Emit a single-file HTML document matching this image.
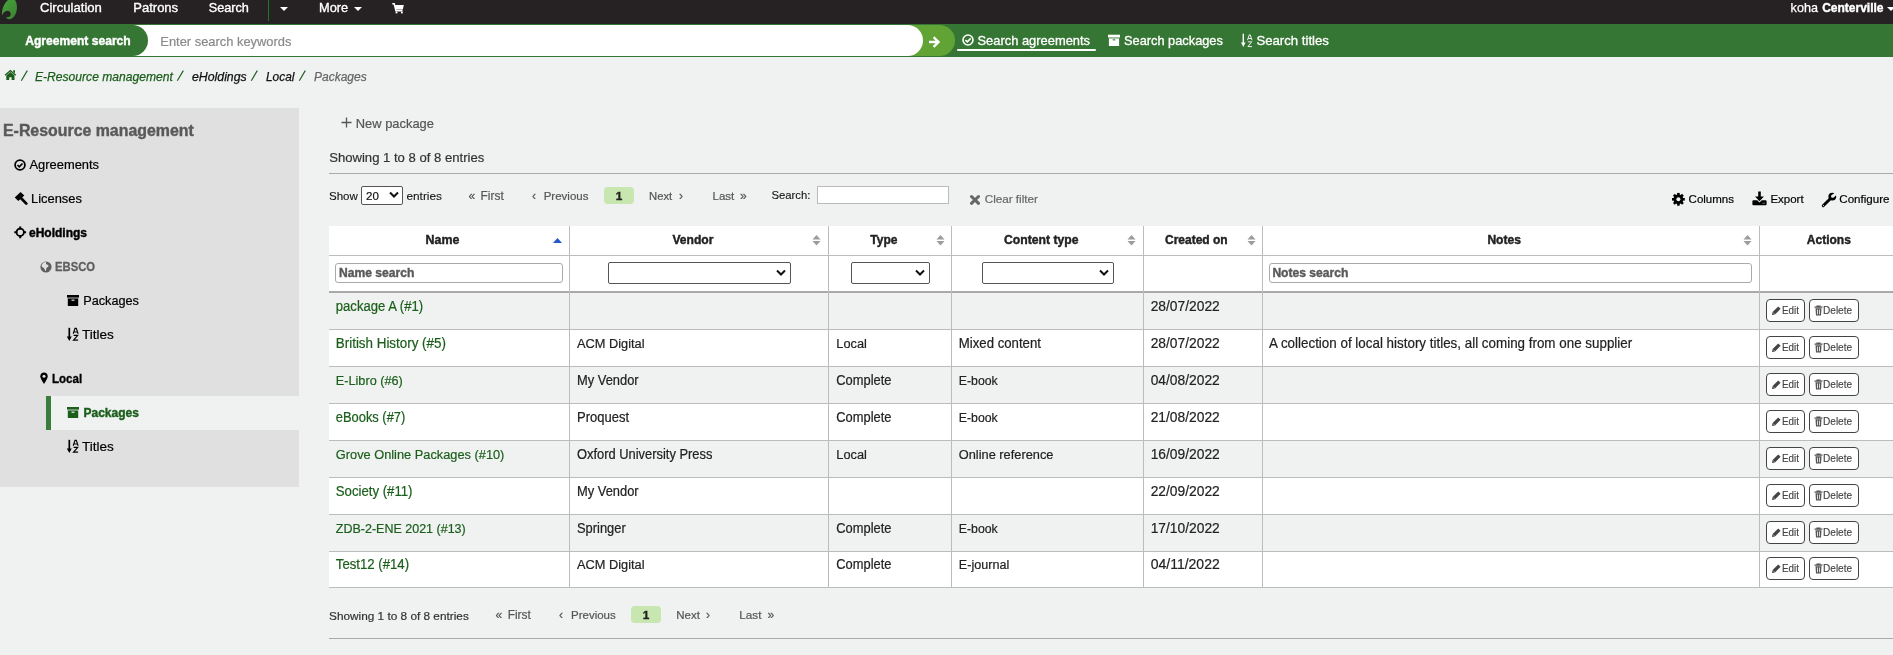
<!DOCTYPE html><html><head><meta charset="utf-8"><style>
html,body{margin:0;padding:0;}
body{width:1893px;height:655px;overflow:hidden;position:relative;will-change:transform;background:#F0F1F1;font-family:"Liberation Sans",sans-serif;}
.t{position:absolute;white-space:nowrap;line-height:1;}
.r{position:absolute;}
</style></head><body>
<div class="r" style="left:0px;top:0px;width:1893px;height:24px;background:#262122;"></div>
<svg class="r" style="left:0px;top:0px;" width="20" height="20" viewBox="0 0 20 20"><defs><linearGradient id="lg" x1="0" y1="0" x2="1" y2="1"><stop offset="0" stop-color="#48a03a"/><stop offset="1" stop-color="#3a8431"/></linearGradient></defs><path d="M8 0 H15 C17.5 3.5 17.6 10 15.6 14 C14 17.5 11.5 19.5 9 19.2 C7.5 19 6.3 18 5.9 17.2 C8.5 17.6 10.9 16.3 10.8 14 C10.7 11.6 8.5 10.6 6.5 10.9 C4.5 11.2 3 12.8 2 15.4 C1.5 10 3.5 4 8 0 Z" fill="url(#lg)"/></svg>
<div class="t" style="left:40.0px;top:1px;font-size:13.1px;color:#fff;font-weight:normal;font-style:normal;-webkit-text-stroke:0.35px #fff;">Circulation</div>
<div class="t" style="left:133.3px;top:1px;font-size:13.0px;color:#fff;font-weight:normal;font-style:normal;-webkit-text-stroke:0.35px #fff;">Patrons</div>
<div class="t" style="left:208.7px;top:2px;font-size:12.7px;color:#fff;font-weight:normal;font-style:normal;-webkit-text-stroke:0.35px #fff;">Search</div>
<div class="t" style="left:319.0px;top:2px;font-size:12.8px;color:#fff;font-weight:normal;font-style:normal;-webkit-text-stroke:0.35px #fff;">More</div>
<div class="r" style="left:268px;top:0px;width:1px;height:21px;background:#1f7a1f;"></div>
<svg class="r" style="left:279px;top:5px;" width="10" height="8" viewBox="0 0 10 8"><path d="M1 2 L9 2 L5 6 Z" fill="#fff"/></svg>
<svg class="r" style="left:353px;top:5px;" width="10" height="8" viewBox="0 0 10 8"><path d="M1 2 L9 2 L5 6 Z" fill="#fff"/></svg>
<svg class="r" style="left:392px;top:3px;" width="12" height="11" viewBox="0 0 12 11"><path d="M0.3 0.8 H2.2 L4 7.6 H10.5" fill="none" stroke="#fff" stroke-width="1.6"/><path d="M3 2 H11.8 L10.8 6.6 H4.2 Z" fill="#fff"/><rect x="3.6" y="8.6" width="1.8" height="1.8" fill="#fff"/><rect x="9" y="8.6" width="1.8" height="1.8" fill="#fff"/></svg>
<div class="t" style="left:1790.6px;top:2px;font-size:12.6px;color:#fff;font-weight:normal;font-style:normal;-webkit-text-stroke:0.25px #fff;">koha</div>
<div class="t" style="left:1822.2px;top:2px;font-size:12.0px;color:#fff;font-weight:bold;font-style:normal;-webkit-text-stroke:0.4px #fff;">Centerville</div>
<svg class="r" style="left:1886px;top:5px;" width="8" height="8" viewBox="0 0 8 8"><path d="M1 2 L9 2 L5 6 Z" fill="#fff"/></svg>
<div class="r" style="left:0px;top:24px;width:1893px;height:33px;background:#367634;"></div>
<div class="r" style="left:880px;top:25px;width:75px;height:31px;background:#61a334;border-radius:0 16px 16px 0;"></div>
<div class="r" style="left:100px;top:25px;width:823px;height:31px;background:#fff;border-radius:0 16px 16px 0;"></div>
<div class="r" style="left:0px;top:25px;width:148px;height:31px;background:#367634;border-radius:0 16px 16px 0;"></div>
<div class="t" style="left:25.2px;top:35px;font-size:12.1px;color:#fff;font-weight:bold;font-style:normal;-webkit-text-stroke:0.4px #fff;">Agreement search</div>
<div class="t" style="left:160.3px;top:36px;font-size:12.9px;color:#8a8a8a;font-weight:normal;font-style:normal;-webkit-text-stroke:0.2px #8a8a8a;">Enter search keywords</div>
<svg class="r" style="left:929px;top:36px;" width="12" height="12" viewBox="0 0 12 12"><path d="M1 6 H9 M5.5 2 L9.5 6 L5.5 10" fill="none" stroke="#fff" stroke-width="2.4" stroke-linecap="square"/></svg>
<svg class="r" style="left:962px;top:34px;" width="12" height="12" viewBox="0 0 12 12"><circle cx="6" cy="6" r="5" fill="none" stroke="#fff" stroke-width="1.6"/><path d="M3.4 6 L5.3 7.9 L8.7 4.4" fill="none" stroke="#fff" stroke-width="1.6"/></svg>
<div class="t" style="left:977.5px;top:35px;font-size:12.9px;color:#fff;font-weight:normal;font-style:normal;-webkit-text-stroke:0.3px #fff;">Search agreements</div>
<div class="r" style="left:957px;top:49px;width:139px;height:2px;background:#fff;border-radius:1px;"></div>
<svg class="r" style="left:1108px;top:34px;" width="12" height="13" viewBox="0 0 12 13"><rect x="0" y="0.7" width="12" height="2.8" fill="#fff"/><path d="M0.9 4.4 H11.1 V12 H0.9 Z" fill="#fff"/><rect x="4.7" y="5.3" width="2.6" height="1.1" fill="#367634"/></svg>
<div class="t" style="left:1124.0px;top:35px;font-size:12.8px;color:#fff;font-weight:normal;font-style:normal;-webkit-text-stroke:0.3px #fff;">Search packages</div>
<svg class="r" style="left:1240px;top:33px;" width="14" height="15" viewBox="0 0 14 15"><path d="M3.3 0.8 V10" stroke="#fff" stroke-width="1.4"/><path d="M1 9.6 H5.6 L3.3 13.9 Z" fill="#fff"/><path d="M7.5 7.2 L9.3 1.8 H10.2 L12 7.2 M8.3 5.5 H11.2" fill="none" stroke="#fff" stroke-width="0.9"/><path d="M7.9 8.8 H11.7 L7.9 13.6 H12" fill="none" stroke="#fff" stroke-width="0.9"/></svg>
<div class="t" style="left:1256.4px;top:34px;font-size:13.2px;color:#fff;font-weight:normal;font-style:normal;-webkit-text-stroke:0.3px #fff;">Search titles</div>
<svg class="r" style="left:4px;top:69px;" width="14" height="12" viewBox="0 0 14 12"><path d="M6.4 0.8 L0.6 5.8 L1.5 6.8 L6.4 2.6 L11.3 6.8 L12.2 5.8 Z" fill="#1b5e1b"/><path d="M9.2 1.3 H11 V4.3 L9.2 2.8 Z" fill="#1b5e1b"/><path d="M2.3 6.5 L6.4 3 L10.5 6.5 V11 H7.6 V8.3 H5.2 V11 H2.3 Z" fill="#1b5e1b"/></svg>
<svg class="r" style="left:20px;top:69px;" width="9" height="13" viewBox="0 0 9 13"><path d="M1.3 11.8 L7.3 1.6" stroke="#1a5e1a" stroke-width="1.15"/></svg>
<div class="t" style="left:35.0px;top:71px;font-size:12.1px;color:#1a5e1a;font-weight:normal;font-style:italic;-webkit-text-stroke:0.25px #1a5e1a;">E-Resource management</div>
<svg class="r" style="left:176px;top:69px;" width="9" height="13" viewBox="0 0 9 13"><path d="M1.3 11.8 L7.3 1.6" stroke="#1a5e1a" stroke-width="1.15"/></svg>
<div class="t" style="left:192.0px;top:71px;font-size:12.3px;color:#111;font-weight:normal;font-style:italic;-webkit-text-stroke:0.25px #111;">eHoldings</div>
<svg class="r" style="left:250px;top:69px;" width="9" height="13" viewBox="0 0 9 13"><path d="M1.3 11.8 L7.3 1.6" stroke="#1a5e1a" stroke-width="1.15"/></svg>
<div class="t" style="left:266.0px;top:72px;font-size:11.9px;color:#111;font-weight:normal;font-style:italic;-webkit-text-stroke:0.25px #111;">Local</div>
<svg class="r" style="left:298px;top:69px;" width="9" height="13" viewBox="0 0 9 13"><path d="M1.3 11.8 L7.3 1.6" stroke="#1a5e1a" stroke-width="1.15"/></svg>
<div class="t" style="left:314.0px;top:71px;font-size:12.0px;color:#666;font-weight:normal;font-style:italic;-webkit-text-stroke:0.25px #666;">Packages</div>
<div class="r" style="left:0px;top:108px;width:299px;height:379px;background:#e0e0e0;"></div>
<div class="t" style="left:3.0px;top:123px;font-size:15.9px;color:#595959;font-weight:bold;font-style:normal;-webkit-text-stroke:0.4px #595959;">E-Resource management</div>
<svg class="r" style="left:14px;top:159px;" width="12" height="12" viewBox="0 0 12 12"><circle cx="6" cy="6" r="4.9" fill="none" stroke="#000" stroke-width="1.8"/><path d="M3.5 6 L5.3 7.8 L8.5 4.5" fill="none" stroke="#000" stroke-width="1.7"/></svg>
<div class="t" style="left:29.5px;top:159px;font-size:12.9px;color:#000;font-weight:normal;font-style:normal;-webkit-text-stroke:0.2px #000;">Agreements</div>
<svg class="r" style="left:14px;top:191px;" width="14" height="15" viewBox="0 0 14 15"><path d="M0.7 6.4 L6.6 1.1 L10.3 4.6 L4.4 9.9 Z" fill="#000"/><path d="M7.4 7.5 L12.3 12.6" stroke="#000" stroke-width="2.7" stroke-linecap="round"/></svg>
<div class="t" style="left:31.0px;top:193px;font-size:12.9px;color:#000;font-weight:normal;font-style:normal;-webkit-text-stroke:0.2px #000;">Licenses</div>
<svg class="r" style="left:14px;top:226px;" width="13" height="13" viewBox="0 0 13 13"><circle cx="6.2" cy="6.3" r="3.7" fill="none" stroke="#000" stroke-width="1.8"/><path d="M6.2 0.4 V3.4 M6.2 9.2 V12.2 M0.3 6.3 H3.3 M9.1 6.3 H12.1" stroke="#000" stroke-width="2"/></svg>
<div class="t" style="left:29.0px;top:227px;font-size:12.0px;color:#000;font-weight:bold;font-style:normal;-webkit-text-stroke:0.4px #000;">eHoldings</div>
<svg class="r" style="left:40px;top:261px;" width="12" height="12" viewBox="0 0 12 12"><circle cx="6" cy="6" r="5.6" fill="#5e5e5e"/><path d="M2.2 3 C3 1.6 4.6 0.8 6 0.9 C6.4 1.8 5.6 2.4 6.2 3.2 C7 4 8.4 3.2 8.6 4.6 C8.7 5.8 7.2 6.2 6.4 7.2 C5.8 8 6.6 9.4 5.6 10 C4.6 9.6 4.8 8 4 7.2 C3.2 6.4 1.8 6.2 1.6 5 C1.5 4.2 1.8 3.6 2.2 3 Z" fill="#e0e0e0"/><path d="M8.6 10 C9.4 9.4 10.2 8.8 10.6 8.2 C10.2 9.2 9.6 9.8 8.6 10 Z" fill="#e0e0e0"/></svg>
<div class="t" style="left:55.4px;top:261px;font-size:12.8px;color:#5e5e5e;font-weight:bold;font-style:normal;-webkit-text-stroke:0.3px #5e5e5e;transform:scaleX(0.881);transform-origin:0 0;">EBSCO</div>
<svg class="r" style="left:67px;top:295px;" width="12" height="11" viewBox="0 0 12 11"><rect x="0" y="0" width="12" height="2.6" fill="#000"/><path d="M0.8 3.4 H11.2 V11 H0.8 Z" fill="#000"/><rect x="4.5" y="4.6" width="3" height="1.2" fill="#e0e0e0"/></svg>
<div class="t" style="left:83.2px;top:295px;font-size:12.7px;color:#000;font-weight:normal;font-style:normal;-webkit-text-stroke:0.2px #000;">Packages</div>
<svg class="r" style="left:66px;top:327px;" width="13" height="15" viewBox="0 0 13 15"><path d="M3.3 0.8 V10" stroke="#000" stroke-width="1.7"/><path d="M0.8 9.4 H5.8 L3.3 13.9 Z" fill="#000"/><path d="M7.2 6.7 L9 1.3 H10.3 L12.1 6.7 M8.1 5 H11.2" fill="none" stroke="#000" stroke-width="1.15"/><path d="M7.6 8.3 H11.8 L7.6 13.2 H12.1" fill="none" stroke="#000" stroke-width="1.25"/></svg>
<div class="t" style="left:82.0px;top:328px;font-size:13.5px;color:#000;font-weight:normal;font-style:normal;-webkit-text-stroke:0.2px #000;">Titles</div>
<svg class="r" style="left:40px;top:372px;" width="9" height="13" viewBox="0 0 9 13"><path d="M4 0.6 C1.8 0.6 0.3 2.3 0.3 4.3 C0.3 6.8 4 12 4 12 C4 12 7.7 6.8 7.7 4.3 C7.7 2.3 6.2 0.6 4 0.6 Z" fill="#000"/><circle cx="4" cy="4.2" r="1.5" fill="#e0e0e0"/></svg>
<div class="t" style="left:51.5px;top:372px;font-size:13.2px;color:#000;font-weight:bold;font-style:normal;-webkit-text-stroke:0.35px #000;transform:scaleX(0.874);transform-origin:0 0;">Local</div>
<div class="r" style="left:46px;top:396px;width:253px;height:34px;background:#f0f1f1;"></div>
<div class="r" style="left:46px;top:396px;width:5px;height:34px;background:#3a7d3a;"></div>
<svg class="r" style="left:67px;top:407px;" width="12" height="11" viewBox="0 0 12 11"><rect x="0" y="0" width="12" height="2.6" fill="#1b5e1b"/><path d="M0.8 3.4 H11.2 V11 H0.8 Z" fill="#1b5e1b"/><rect x="4.5" y="4.6" width="3" height="1.2" fill="#f0f1f1"/></svg>
<div class="t" style="left:83.5px;top:407px;font-size:12.0px;color:#1b5e1b;font-weight:bold;font-style:normal;-webkit-text-stroke:0.4px #1b5e1b;">Packages</div>
<svg class="r" style="left:66px;top:439px;" width="13" height="15" viewBox="0 0 13 15"><path d="M3.3 0.8 V10" stroke="#000" stroke-width="1.7"/><path d="M0.8 9.4 H5.8 L3.3 13.9 Z" fill="#000"/><path d="M7.2 6.7 L9 1.3 H10.3 L12.1 6.7 M8.1 5 H11.2" fill="none" stroke="#000" stroke-width="1.15"/><path d="M7.6 8.3 H11.8 L7.6 13.2 H12.1" fill="none" stroke="#000" stroke-width="1.25"/></svg>
<div class="t" style="left:82.0px;top:440px;font-size:13.5px;color:#000;font-weight:normal;font-style:normal;-webkit-text-stroke:0.2px #000;">Titles</div>
<svg class="r" style="left:341px;top:117px;" width="11" height="11" viewBox="0 0 11 11"><path d="M5.5 0.5 V10.5 M0.5 5.5 H10.5" stroke="#555" stroke-width="1.3"/></svg>
<div class="t" style="left:355.8px;top:118px;font-size:12.9px;color:#555;font-weight:normal;font-style:normal;-webkit-text-stroke:0.2px #555;">New package</div>
<div class="t" style="left:329.2px;top:151px;font-size:13.1px;color:#333;font-weight:normal;font-style:normal;-webkit-text-stroke:0.2px #333;">Showing 1 to 8 of 8 entries</div>
<div class="r" style="left:329px;top:173px;width:1564px;height:1px;background:#aaa;"></div>
<div class="t" style="left:329.0px;top:191px;font-size:11.5px;color:#111;font-weight:normal;font-style:normal;-webkit-text-stroke:0.1px #111;">Show</div>
<div class="r" style="left:361px;top:186px;width:42px;height:19px;background:#fff;box-sizing:border-box;border:1px solid #555;border-radius:2px;"></div>
<div class="t" style="left:366px;top:191px;font-size:11.5px;color:#111;font-weight:normal;font-style:normal;-webkit-text-stroke:0.2px #111;">20</div>
<svg class="r" style="left:389px;top:191px;" width="10" height="8" viewBox="0 0 10 8"><path d="M1 1.5 L5 5.5 L9 1.5" fill="none" stroke="#111" stroke-width="2"/></svg>
<div class="t" style="left:406.5px;top:191px;font-size:11.8px;color:#111;font-weight:normal;font-style:normal;-webkit-text-stroke:0.1px #111;">entries</div>
<div class="t" style="left:468.5px;top:190px;font-size:12px;color:#555;font-weight:normal;font-style:normal;-webkit-text-stroke:0.2px #555;">&laquo;</div>
<div class="t" style="left:480.6px;top:191px;font-size:11.9px;color:#555;font-weight:normal;font-style:normal;-webkit-text-stroke:0.2px #555;">First</div>
<div class="t" style="left:532px;top:190px;font-size:12px;color:#555;font-weight:normal;font-style:normal;-webkit-text-stroke:0.2px #555;">&lsaquo;</div>
<div class="t" style="left:543.7px;top:191px;font-size:11.5px;color:#555;font-weight:normal;font-style:normal;-webkit-text-stroke:0.2px #555;">Previous</div>
<div class="r" style="left:604px;top:187px;width:30px;height:17px;background:#c8e6b0;border-radius:4px;"></div>
<div class="t" style="left:615.7px;top:191px;font-size:11.8px;color:#222;font-weight:bold;font-style:normal;-webkit-text-stroke:0.4px #222;">1</div>
<div class="t" style="left:649.0px;top:191px;font-size:11.3px;color:#555;font-weight:normal;font-style:normal;-webkit-text-stroke:0.2px #555;">Next</div>
<div class="t" style="left:679px;top:190px;font-size:12px;color:#555;font-weight:normal;font-style:normal;-webkit-text-stroke:0.2px #555;">&rsaquo;</div>
<div class="t" style="left:712.5px;top:191px;font-size:11.5px;color:#555;font-weight:normal;font-style:normal;-webkit-text-stroke:0.2px #555;">Last</div>
<div class="t" style="left:740px;top:190px;font-size:12px;color:#555;font-weight:normal;font-style:normal;-webkit-text-stroke:0.2px #555;">&raquo;</div>
<div class="t" style="left:771.4px;top:190px;font-size:11.3px;color:#111;font-weight:normal;font-style:normal;-webkit-text-stroke:0.1px #111;">Search:</div>
<div class="r" style="left:817px;top:186px;width:132px;height:18px;background:#fff;box-sizing:border-box;border:1px solid #bbb;"></div>
<svg class="r" style="left:969px;top:194px;" width="12" height="12" viewBox="0 0 12 12"><path d="M2.5 2.5 L9.5 9.3 M9.5 2.5 L2.5 9.3" stroke="#666" stroke-width="3" stroke-linecap="round"/></svg>
<div class="t" style="left:984.7px;top:193px;font-size:11.7px;color:#666;font-weight:normal;font-style:normal;-webkit-text-stroke:0.2px #666;">Clear filter</div>
<svg class="r" style="left:1671px;top:192px;" width="15" height="15" viewBox="0 0 15 15"><circle cx="7.4" cy="7.3" r="4.9" fill="#000"/><rect x="6.1" y="0.9" width="2.6" height="3" transform="rotate(0 7.4 7.3)" fill="#000"/><rect x="6.1" y="0.9" width="2.6" height="3" transform="rotate(45 7.4 7.3)" fill="#000"/><rect x="6.1" y="0.9" width="2.6" height="3" transform="rotate(90 7.4 7.3)" fill="#000"/><rect x="6.1" y="0.9" width="2.6" height="3" transform="rotate(135 7.4 7.3)" fill="#000"/><rect x="6.1" y="0.9" width="2.6" height="3" transform="rotate(180 7.4 7.3)" fill="#000"/><rect x="6.1" y="0.9" width="2.6" height="3" transform="rotate(225 7.4 7.3)" fill="#000"/><rect x="6.1" y="0.9" width="2.6" height="3" transform="rotate(270 7.4 7.3)" fill="#000"/><rect x="6.1" y="0.9" width="2.6" height="3" transform="rotate(315 7.4 7.3)" fill="#000"/><circle cx="7.4" cy="7.3" r="2" fill="#f0f1f1"/></svg>
<div class="t" style="left:1688.6px;top:194px;font-size:11.5px;color:#000;font-weight:normal;font-style:normal;-webkit-text-stroke:0.2px #000;">Columns</div>
<svg class="r" style="left:1752px;top:191px;" width="16" height="15" viewBox="0 0 16 15"><path d="M6.2 0.5 H8.8 V5.6 H11.9 L7.5 10.3 L3.1 5.6 H6.2 Z" fill="#000"/><path d="M1.4 9.2 H5.2 L7.5 11.6 L9.8 9.2 H13.6 Q14.6 9.2 14.6 10.2 V13.2 Q14.6 14.2 13.6 14.2 H1.4 Q0.4 14.2 0.4 13.2 V10.2 Q0.4 9.2 1.4 9.2 Z" fill="#000"/><rect x="10.5" y="11.8" width="2.5" height="0.8" fill="#888"/></svg>
<div class="t" style="left:1770.4px;top:194px;font-size:11.5px;color:#000;font-weight:normal;font-style:normal;-webkit-text-stroke:0.2px #000;">Export</div>
<svg class="r" style="left:1821px;top:192px;" width="16" height="16" viewBox="0 0 16 16"><path d="M9.3 6.7 L2.2 13.8" stroke="#000" stroke-width="2.9" stroke-linecap="round"/><circle cx="11.3" cy="4.6" r="3.9" fill="#000"/><circle cx="11.7" cy="4.2" r="1.6" fill="#f0f1f1"/><path d="M11.3 3.0 L13.6 0.7 L15.6 2.7 L13.3 5.0 Z" fill="#f0f1f1"/><circle cx="2.4" cy="13.6" r="0.6" fill="#f0f1f1"/></svg>
<div class="t" style="left:1839.3px;top:193px;font-size:11.6px;color:#000;font-weight:normal;font-style:normal;-webkit-text-stroke:0.2px #000;">Configure</div>
<div class="r" style="left:329px;top:226px;width:1564px;height:65px;background:#fff;"></div>
<div class="r" style="left:329px;top:255px;width:1564px;height:1px;background:#bcbcbc;"></div>
<div class="r" style="left:329px;top:291px;width:1564px;height:2px;background:#a9a9a9;"></div>
<div class="r" style="left:329px;top:329px;width:1564px;height:1px;background:#bcbcbc;"></div>
<div class="r" style="left:329px;top:330px;width:1564px;height:36px;background:#fff;"></div>
<div class="r" style="left:329px;top:366px;width:1564px;height:1px;background:#bcbcbc;"></div>
<div class="r" style="left:329px;top:403px;width:1564px;height:1px;background:#bcbcbc;"></div>
<div class="r" style="left:329px;top:404px;width:1564px;height:36px;background:#fff;"></div>
<div class="r" style="left:329px;top:440px;width:1564px;height:1px;background:#bcbcbc;"></div>
<div class="r" style="left:329px;top:477px;width:1564px;height:1px;background:#bcbcbc;"></div>
<div class="r" style="left:329px;top:478px;width:1564px;height:36px;background:#fff;"></div>
<div class="r" style="left:329px;top:514px;width:1564px;height:1px;background:#bcbcbc;"></div>
<div class="r" style="left:329px;top:551px;width:1564px;height:1px;background:#bcbcbc;"></div>
<div class="r" style="left:329px;top:552px;width:1564px;height:35px;background:#fff;"></div>
<div class="r" style="left:329px;top:587px;width:1564px;height:1px;background:#bcbcbc;"></div>
<div class="r" style="left:569px;top:226px;width:1px;height:362px;background:#bcbcbc;"></div>
<div class="r" style="left:828px;top:226px;width:1px;height:362px;background:#bcbcbc;"></div>
<div class="r" style="left:951px;top:226px;width:1px;height:362px;background:#bcbcbc;"></div>
<div class="r" style="left:1143px;top:226px;width:1px;height:362px;background:#bcbcbc;"></div>
<div class="r" style="left:1262px;top:226px;width:1px;height:362px;background:#bcbcbc;"></div>
<div class="r" style="left:1759px;top:226px;width:1px;height:362px;background:#bcbcbc;"></div>
<div class="t" style="left:425.6px;top:234px;font-size:12.4px;color:#222;font-weight:bold;font-style:normal;-webkit-text-stroke:0.4px #222;">Name</div>
<svg class="r" style="left:552px;top:237px;" width="11" height="7" viewBox="0 0 11 7"><path d="M5.5 1 L10 6 H1 Z" fill="#2456cc"/></svg>
<div class="t" style="left:672.4px;top:234px;font-size:12.1px;color:#222;font-weight:bold;font-style:normal;-webkit-text-stroke:0.4px #222;">Vendor</div>
<svg class="r" style="left:812px;top:235px;" width="9" height="11" viewBox="0 0 9 11"><path d="M4.5 0 L8.5 4.6 H0.5 Z M4.5 10.5 L8.5 5.9 H0.5 Z" fill="#9c9c9c"/></svg>
<div class="t" style="left:870.3px;top:234px;font-size:12.0px;color:#222;font-weight:bold;font-style:normal;-webkit-text-stroke:0.4px #222;">Type</div>
<svg class="r" style="left:936px;top:235px;" width="9" height="11" viewBox="0 0 9 11"><path d="M4.5 0 L8.5 4.6 H0.5 Z M4.5 10.5 L8.5 5.9 H0.5 Z" fill="#9c9c9c"/></svg>
<div class="t" style="left:1004.0px;top:234px;font-size:12.2px;color:#222;font-weight:bold;font-style:normal;-webkit-text-stroke:0.4px #222;">Content type</div>
<svg class="r" style="left:1127px;top:235px;" width="9" height="11" viewBox="0 0 9 11"><path d="M4.5 0 L8.5 4.6 H0.5 Z M4.5 10.5 L8.5 5.9 H0.5 Z" fill="#9c9c9c"/></svg>
<div class="t" style="left:1165.0px;top:234px;font-size:12.0px;color:#222;font-weight:bold;font-style:normal;-webkit-text-stroke:0.4px #222;">Created on</div>
<svg class="r" style="left:1247px;top:235px;" width="9" height="11" viewBox="0 0 9 11"><path d="M4.5 0 L8.5 4.6 H0.5 Z M4.5 10.5 L8.5 5.9 H0.5 Z" fill="#9c9c9c"/></svg>
<div class="t" style="left:1487.4px;top:234px;font-size:12.1px;color:#222;font-weight:bold;font-style:normal;-webkit-text-stroke:0.4px #222;">Notes</div>
<svg class="r" style="left:1743px;top:235px;" width="9" height="11" viewBox="0 0 9 11"><path d="M4.5 0 L8.5 4.6 H0.5 Z M4.5 10.5 L8.5 5.9 H0.5 Z" fill="#9c9c9c"/></svg>
<div class="t" style="left:1806.8px;top:234px;font-size:12.0px;color:#222;font-weight:bold;font-style:normal;-webkit-text-stroke:0.4px #222;">Actions</div>
<div class="r" style="left:335px;top:263px;width:228px;height:20px;background:#fff;box-sizing:border-box;border:1px solid #aaa;border-radius:3px;"></div>
<div class="t" style="left:339.0px;top:267px;font-size:12.1px;color:#595959;font-weight:bold;font-style:normal;-webkit-text-stroke:0.4px #595959;">Name search</div>
<div class="r" style="left:608px;top:262px;width:183px;height:22px;background:#fff;box-sizing:border-box;border:1px solid #555;border-radius:2px;"></div>
<svg class="r" style="left:776px;top:269px;" width="10" height="8" viewBox="0 0 10 8"><path d="M1 1.5 L5 5.5 L9 1.5" fill="none" stroke="#111" stroke-width="2"/></svg>
<div class="r" style="left:851px;top:262px;width:79px;height:22px;background:#fff;box-sizing:border-box;border:1px solid #555;border-radius:2px;"></div>
<svg class="r" style="left:915px;top:269px;" width="10" height="8" viewBox="0 0 10 8"><path d="M1 1.5 L5 5.5 L9 1.5" fill="none" stroke="#111" stroke-width="2"/></svg>
<div class="r" style="left:982px;top:262px;width:132px;height:22px;background:#fff;box-sizing:border-box;border:1px solid #555;border-radius:2px;"></div>
<svg class="r" style="left:1099px;top:269px;" width="10" height="8" viewBox="0 0 10 8"><path d="M1 1.5 L5 5.5 L9 1.5" fill="none" stroke="#111" stroke-width="2"/></svg>
<div class="r" style="left:1269px;top:263px;width:483px;height:20px;background:#fff;box-sizing:border-box;border:1px solid #aaa;border-radius:3px;"></div>
<div class="t" style="left:1272.4px;top:267px;font-size:12.1px;color:#595959;font-weight:bold;font-style:normal;-webkit-text-stroke:0.4px #595959;">Notes search</div>
<div class="t" style="left:335.8px;top:300px;font-size:13.1px;color:#1a5e1a;font-weight:normal;font-style:normal;-webkit-text-stroke:0.2px #1a5e1a;transform:scaleY(1.07);transform-origin:0 11px;">package A (#1)</div>
<div class="t" style="left:1150.7px;top:300px;font-size:13.8px;color:#222;font-weight:normal;font-style:normal;-webkit-text-stroke:0.2px #222;transform:scaleY(1.07);transform-origin:0 11px;">28/07/2022</div>
<div class="r" style="left:1766px;top:299px;width:39px;height:23px;background:#fff;box-sizing:border-box;border:1px solid #444;border-radius:4px;"></div>
<svg class="r" style="left:1771px;top:305px;" width="10" height="11" viewBox="0 0 10 11"><path d="M1 10 L1.6 7 L7.2 1.4 L9.6 3.8 L4 9.4 Z" fill="#444"/><path d="M2.2 7.6 L4.4 9.8" stroke="#fff" stroke-width="0.5"/></svg>
<div class="t" style="left:1781.6px;top:305px;font-size:10.6px;color:#444;font-weight:normal;font-style:normal;-webkit-text-stroke:0.15px #444;transform:scaleX(0.928);transform-origin:0 0;">Edit</div>
<div class="r" style="left:1809px;top:299px;width:50px;height:23px;background:#fff;box-sizing:border-box;border:1px solid #444;border-radius:4px;"></div>
<svg class="r" style="left:1814px;top:305px;" width="9" height="11" viewBox="0 0 9 11"><path d="M0.5 2.2 H8.5 M3 2 V1 H6 V2" fill="none" stroke="#555" stroke-width="1.2"/><path d="M1.5 3.3 H7.5 L7 10.5 H2 Z" fill="#555"/><path d="M3.5 4.5 V9.3 M5.5 4.5 V9.3" stroke="#fff" stroke-width="0.8"/></svg>
<div class="t" style="left:1823.4px;top:305px;font-size:10.6px;color:#444;font-weight:normal;font-style:normal;-webkit-text-stroke:0.15px #444;transform:scaleX(0.951);transform-origin:0 0;">Delete</div>
<div class="t" style="left:335.8px;top:337px;font-size:13.4px;color:#1a5e1a;font-weight:normal;font-style:normal;-webkit-text-stroke:0.2px #1a5e1a;transform:scaleY(1.07);transform-origin:0 11px;">British History (#5)</div>
<div class="t" style="left:577.0px;top:338px;font-size:12.8px;color:#222;font-weight:normal;font-style:normal;-webkit-text-stroke:0.2px #222;transform:scaleY(1.07);transform-origin:0 10px;">ACM Digital</div>
<div class="t" style="left:836.3px;top:338px;font-size:12.8px;color:#222;font-weight:normal;font-style:normal;-webkit-text-stroke:0.2px #222;transform:scaleY(1.07);transform-origin:0 10px;">Local</div>
<div class="t" style="left:958.8px;top:337px;font-size:13.2px;color:#222;font-weight:normal;font-style:normal;-webkit-text-stroke:0.2px #222;transform:scaleY(1.07);transform-origin:0 11px;">Mixed content</div>
<div class="t" style="left:1269.0px;top:337px;font-size:13.4px;color:#222;font-weight:normal;font-style:normal;-webkit-text-stroke:0.2px #222;transform:scaleY(1.07);transform-origin:0 11px;">A collection of local history titles, all coming from one supplier</div>
<div class="t" style="left:1150.7px;top:337px;font-size:13.8px;color:#222;font-weight:normal;font-style:normal;-webkit-text-stroke:0.2px #222;transform:scaleY(1.07);transform-origin:0 11px;">28/07/2022</div>
<div class="r" style="left:1766px;top:336px;width:39px;height:23px;background:#fff;box-sizing:border-box;border:1px solid #444;border-radius:4px;"></div>
<svg class="r" style="left:1771px;top:342px;" width="10" height="11" viewBox="0 0 10 11"><path d="M1 10 L1.6 7 L7.2 1.4 L9.6 3.8 L4 9.4 Z" fill="#444"/><path d="M2.2 7.6 L4.4 9.8" stroke="#fff" stroke-width="0.5"/></svg>
<div class="t" style="left:1781.6px;top:342px;font-size:10.6px;color:#444;font-weight:normal;font-style:normal;-webkit-text-stroke:0.15px #444;transform:scaleX(0.928);transform-origin:0 0;">Edit</div>
<div class="r" style="left:1809px;top:336px;width:50px;height:23px;background:#fff;box-sizing:border-box;border:1px solid #444;border-radius:4px;"></div>
<svg class="r" style="left:1814px;top:342px;" width="9" height="11" viewBox="0 0 9 11"><path d="M0.5 2.2 H8.5 M3 2 V1 H6 V2" fill="none" stroke="#555" stroke-width="1.2"/><path d="M1.5 3.3 H7.5 L7 10.5 H2 Z" fill="#555"/><path d="M3.5 4.5 V9.3 M5.5 4.5 V9.3" stroke="#fff" stroke-width="0.8"/></svg>
<div class="t" style="left:1823.4px;top:342px;font-size:10.6px;color:#444;font-weight:normal;font-style:normal;-webkit-text-stroke:0.15px #444;transform:scaleX(0.951);transform-origin:0 0;">Delete</div>
<div class="t" style="left:335.8px;top:375px;font-size:12.7px;color:#1a5e1a;font-weight:normal;font-style:normal;-webkit-text-stroke:0.2px #1a5e1a;transform:scaleY(1.07);transform-origin:0 10px;">E-Libro (#6)</div>
<div class="t" style="left:577.0px;top:375px;font-size:12.9px;color:#222;font-weight:normal;font-style:normal;-webkit-text-stroke:0.2px #222;transform:scaleY(1.07);transform-origin:0 10px;">My Vendor</div>
<div class="t" style="left:836.3px;top:375px;font-size:12.9px;color:#222;font-weight:normal;font-style:normal;-webkit-text-stroke:0.2px #222;transform:scaleY(1.07);transform-origin:0 10px;">Complete</div>
<div class="t" style="left:958.8px;top:375px;font-size:12.3px;color:#222;font-weight:normal;font-style:normal;-webkit-text-stroke:0.2px #222;transform:scaleY(1.07);transform-origin:0 10px;">E-book</div>
<div class="t" style="left:1150.7px;top:374px;font-size:13.8px;color:#222;font-weight:normal;font-style:normal;-webkit-text-stroke:0.2px #222;transform:scaleY(1.07);transform-origin:0 11px;">04/08/2022</div>
<div class="r" style="left:1766px;top:373px;width:39px;height:23px;background:#fff;box-sizing:border-box;border:1px solid #444;border-radius:4px;"></div>
<svg class="r" style="left:1771px;top:379px;" width="10" height="11" viewBox="0 0 10 11"><path d="M1 10 L1.6 7 L7.2 1.4 L9.6 3.8 L4 9.4 Z" fill="#444"/><path d="M2.2 7.6 L4.4 9.8" stroke="#fff" stroke-width="0.5"/></svg>
<div class="t" style="left:1781.6px;top:379px;font-size:10.6px;color:#444;font-weight:normal;font-style:normal;-webkit-text-stroke:0.15px #444;transform:scaleX(0.928);transform-origin:0 0;">Edit</div>
<div class="r" style="left:1809px;top:373px;width:50px;height:23px;background:#fff;box-sizing:border-box;border:1px solid #444;border-radius:4px;"></div>
<svg class="r" style="left:1814px;top:379px;" width="9" height="11" viewBox="0 0 9 11"><path d="M0.5 2.2 H8.5 M3 2 V1 H6 V2" fill="none" stroke="#555" stroke-width="1.2"/><path d="M1.5 3.3 H7.5 L7 10.5 H2 Z" fill="#555"/><path d="M3.5 4.5 V9.3 M5.5 4.5 V9.3" stroke="#fff" stroke-width="0.8"/></svg>
<div class="t" style="left:1823.4px;top:379px;font-size:10.6px;color:#444;font-weight:normal;font-style:normal;-webkit-text-stroke:0.15px #444;transform:scaleX(0.951);transform-origin:0 0;">Delete</div>
<div class="t" style="left:335.8px;top:412px;font-size:12.9px;color:#1a5e1a;font-weight:normal;font-style:normal;-webkit-text-stroke:0.2px #1a5e1a;transform:scaleY(1.07);transform-origin:0 10px;">eBooks (#7)</div>
<div class="t" style="left:577.0px;top:411px;font-size:13.0px;color:#222;font-weight:normal;font-style:normal;-webkit-text-stroke:0.2px #222;transform:scaleY(1.07);transform-origin:0 11px;">Proquest</div>
<div class="t" style="left:836.3px;top:412px;font-size:12.9px;color:#222;font-weight:normal;font-style:normal;-webkit-text-stroke:0.2px #222;transform:scaleY(1.07);transform-origin:0 10px;">Complete</div>
<div class="t" style="left:958.8px;top:412px;font-size:12.3px;color:#222;font-weight:normal;font-style:normal;-webkit-text-stroke:0.2px #222;transform:scaleY(1.07);transform-origin:0 10px;">E-book</div>
<div class="t" style="left:1150.7px;top:411px;font-size:13.8px;color:#222;font-weight:normal;font-style:normal;-webkit-text-stroke:0.2px #222;transform:scaleY(1.07);transform-origin:0 11px;">21/08/2022</div>
<div class="r" style="left:1766px;top:410px;width:39px;height:23px;background:#fff;box-sizing:border-box;border:1px solid #444;border-radius:4px;"></div>
<svg class="r" style="left:1771px;top:416px;" width="10" height="11" viewBox="0 0 10 11"><path d="M1 10 L1.6 7 L7.2 1.4 L9.6 3.8 L4 9.4 Z" fill="#444"/><path d="M2.2 7.6 L4.4 9.8" stroke="#fff" stroke-width="0.5"/></svg>
<div class="t" style="left:1781.6px;top:416px;font-size:10.6px;color:#444;font-weight:normal;font-style:normal;-webkit-text-stroke:0.15px #444;transform:scaleX(0.928);transform-origin:0 0;">Edit</div>
<div class="r" style="left:1809px;top:410px;width:50px;height:23px;background:#fff;box-sizing:border-box;border:1px solid #444;border-radius:4px;"></div>
<svg class="r" style="left:1814px;top:416px;" width="9" height="11" viewBox="0 0 9 11"><path d="M0.5 2.2 H8.5 M3 2 V1 H6 V2" fill="none" stroke="#555" stroke-width="1.2"/><path d="M1.5 3.3 H7.5 L7 10.5 H2 Z" fill="#555"/><path d="M3.5 4.5 V9.3 M5.5 4.5 V9.3" stroke="#fff" stroke-width="0.8"/></svg>
<div class="t" style="left:1823.4px;top:416px;font-size:10.6px;color:#444;font-weight:normal;font-style:normal;-webkit-text-stroke:0.15px #444;transform:scaleX(0.951);transform-origin:0 0;">Delete</div>
<div class="t" style="left:335.8px;top:449px;font-size:12.8px;color:#1a5e1a;font-weight:normal;font-style:normal;-webkit-text-stroke:0.2px #1a5e1a;transform:scaleY(1.07);transform-origin:0 10px;">Grove Online Packages (#10)</div>
<div class="t" style="left:577.0px;top:449px;font-size:12.9px;color:#222;font-weight:normal;font-style:normal;-webkit-text-stroke:0.2px #222;transform:scaleY(1.07);transform-origin:0 10px;">Oxford University Press</div>
<div class="t" style="left:836.3px;top:449px;font-size:12.8px;color:#222;font-weight:normal;font-style:normal;-webkit-text-stroke:0.2px #222;transform:scaleY(1.07);transform-origin:0 10px;">Local</div>
<div class="t" style="left:958.8px;top:449px;font-size:12.8px;color:#222;font-weight:normal;font-style:normal;-webkit-text-stroke:0.2px #222;transform:scaleY(1.07);transform-origin:0 10px;">Online reference</div>
<div class="t" style="left:1150.7px;top:448px;font-size:13.8px;color:#222;font-weight:normal;font-style:normal;-webkit-text-stroke:0.2px #222;transform:scaleY(1.07);transform-origin:0 11px;">16/09/2022</div>
<div class="r" style="left:1766px;top:447px;width:39px;height:23px;background:#fff;box-sizing:border-box;border:1px solid #444;border-radius:4px;"></div>
<svg class="r" style="left:1771px;top:453px;" width="10" height="11" viewBox="0 0 10 11"><path d="M1 10 L1.6 7 L7.2 1.4 L9.6 3.8 L4 9.4 Z" fill="#444"/><path d="M2.2 7.6 L4.4 9.8" stroke="#fff" stroke-width="0.5"/></svg>
<div class="t" style="left:1781.6px;top:453px;font-size:10.6px;color:#444;font-weight:normal;font-style:normal;-webkit-text-stroke:0.15px #444;transform:scaleX(0.928);transform-origin:0 0;">Edit</div>
<div class="r" style="left:1809px;top:447px;width:50px;height:23px;background:#fff;box-sizing:border-box;border:1px solid #444;border-radius:4px;"></div>
<svg class="r" style="left:1814px;top:453px;" width="9" height="11" viewBox="0 0 9 11"><path d="M0.5 2.2 H8.5 M3 2 V1 H6 V2" fill="none" stroke="#555" stroke-width="1.2"/><path d="M1.5 3.3 H7.5 L7 10.5 H2 Z" fill="#555"/><path d="M3.5 4.5 V9.3 M5.5 4.5 V9.3" stroke="#fff" stroke-width="0.8"/></svg>
<div class="t" style="left:1823.4px;top:453px;font-size:10.6px;color:#444;font-weight:normal;font-style:normal;-webkit-text-stroke:0.15px #444;transform:scaleX(0.951);transform-origin:0 0;">Delete</div>
<div class="t" style="left:335.8px;top:485px;font-size:13.2px;color:#1a5e1a;font-weight:normal;font-style:normal;-webkit-text-stroke:0.2px #1a5e1a;transform:scaleY(1.07);transform-origin:0 11px;">Society (#11)</div>
<div class="t" style="left:577.0px;top:486px;font-size:12.9px;color:#222;font-weight:normal;font-style:normal;-webkit-text-stroke:0.2px #222;transform:scaleY(1.07);transform-origin:0 10px;">My Vendor</div>
<div class="t" style="left:1150.7px;top:485px;font-size:13.8px;color:#222;font-weight:normal;font-style:normal;-webkit-text-stroke:0.2px #222;transform:scaleY(1.07);transform-origin:0 11px;">22/09/2022</div>
<div class="r" style="left:1766px;top:484px;width:39px;height:23px;background:#fff;box-sizing:border-box;border:1px solid #444;border-radius:4px;"></div>
<svg class="r" style="left:1771px;top:490px;" width="10" height="11" viewBox="0 0 10 11"><path d="M1 10 L1.6 7 L7.2 1.4 L9.6 3.8 L4 9.4 Z" fill="#444"/><path d="M2.2 7.6 L4.4 9.8" stroke="#fff" stroke-width="0.5"/></svg>
<div class="t" style="left:1781.6px;top:490px;font-size:10.6px;color:#444;font-weight:normal;font-style:normal;-webkit-text-stroke:0.15px #444;transform:scaleX(0.928);transform-origin:0 0;">Edit</div>
<div class="r" style="left:1809px;top:484px;width:50px;height:23px;background:#fff;box-sizing:border-box;border:1px solid #444;border-radius:4px;"></div>
<svg class="r" style="left:1814px;top:490px;" width="9" height="11" viewBox="0 0 9 11"><path d="M0.5 2.2 H8.5 M3 2 V1 H6 V2" fill="none" stroke="#555" stroke-width="1.2"/><path d="M1.5 3.3 H7.5 L7 10.5 H2 Z" fill="#555"/><path d="M3.5 4.5 V9.3 M5.5 4.5 V9.3" stroke="#fff" stroke-width="0.8"/></svg>
<div class="t" style="left:1823.4px;top:490px;font-size:10.6px;color:#444;font-weight:normal;font-style:normal;-webkit-text-stroke:0.15px #444;transform:scaleX(0.951);transform-origin:0 0;">Delete</div>
<div class="t" style="left:335.8px;top:523px;font-size:12.5px;color:#1a5e1a;font-weight:normal;font-style:normal;-webkit-text-stroke:0.2px #1a5e1a;transform:scaleY(1.07);transform-origin:0 10px;">ZDB-2-ENE 2021 (#13)</div>
<div class="t" style="left:577.0px;top:523px;font-size:12.9px;color:#222;font-weight:normal;font-style:normal;-webkit-text-stroke:0.2px #222;transform:scaleY(1.07);transform-origin:0 10px;">Springer</div>
<div class="t" style="left:836.3px;top:523px;font-size:12.9px;color:#222;font-weight:normal;font-style:normal;-webkit-text-stroke:0.2px #222;transform:scaleY(1.07);transform-origin:0 10px;">Complete</div>
<div class="t" style="left:958.8px;top:523px;font-size:12.3px;color:#222;font-weight:normal;font-style:normal;-webkit-text-stroke:0.2px #222;transform:scaleY(1.07);transform-origin:0 10px;">E-book</div>
<div class="t" style="left:1150.7px;top:522px;font-size:13.8px;color:#222;font-weight:normal;font-style:normal;-webkit-text-stroke:0.2px #222;transform:scaleY(1.07);transform-origin:0 11px;">17/10/2022</div>
<div class="r" style="left:1766px;top:521px;width:39px;height:23px;background:#fff;box-sizing:border-box;border:1px solid #444;border-radius:4px;"></div>
<svg class="r" style="left:1771px;top:527px;" width="10" height="11" viewBox="0 0 10 11"><path d="M1 10 L1.6 7 L7.2 1.4 L9.6 3.8 L4 9.4 Z" fill="#444"/><path d="M2.2 7.6 L4.4 9.8" stroke="#fff" stroke-width="0.5"/></svg>
<div class="t" style="left:1781.6px;top:527px;font-size:10.6px;color:#444;font-weight:normal;font-style:normal;-webkit-text-stroke:0.15px #444;transform:scaleX(0.928);transform-origin:0 0;">Edit</div>
<div class="r" style="left:1809px;top:521px;width:50px;height:23px;background:#fff;box-sizing:border-box;border:1px solid #444;border-radius:4px;"></div>
<svg class="r" style="left:1814px;top:527px;" width="9" height="11" viewBox="0 0 9 11"><path d="M0.5 2.2 H8.5 M3 2 V1 H6 V2" fill="none" stroke="#555" stroke-width="1.2"/><path d="M1.5 3.3 H7.5 L7 10.5 H2 Z" fill="#555"/><path d="M3.5 4.5 V9.3 M5.5 4.5 V9.3" stroke="#fff" stroke-width="0.8"/></svg>
<div class="t" style="left:1823.4px;top:527px;font-size:10.6px;color:#444;font-weight:normal;font-style:normal;-webkit-text-stroke:0.15px #444;transform:scaleX(0.951);transform-origin:0 0;">Delete</div>
<div class="t" style="left:335.8px;top:558px;font-size:13.2px;color:#1a5e1a;font-weight:normal;font-style:normal;-webkit-text-stroke:0.2px #1a5e1a;transform:scaleY(1.07);transform-origin:0 11px;">Test12 (#14)</div>
<div class="t" style="left:577.0px;top:559px;font-size:12.8px;color:#222;font-weight:normal;font-style:normal;-webkit-text-stroke:0.2px #222;transform:scaleY(1.07);transform-origin:0 10px;">ACM Digital</div>
<div class="t" style="left:836.3px;top:559px;font-size:12.9px;color:#222;font-weight:normal;font-style:normal;-webkit-text-stroke:0.2px #222;transform:scaleY(1.07);transform-origin:0 10px;">Complete</div>
<div class="t" style="left:958.8px;top:559px;font-size:12.6px;color:#222;font-weight:normal;font-style:normal;-webkit-text-stroke:0.2px #222;transform:scaleY(1.07);transform-origin:0 10px;">E-journal</div>
<div class="t" style="left:1150.7px;top:557px;font-size:14.0px;color:#222;font-weight:normal;font-style:normal;-webkit-text-stroke:0.2px #222;transform:scaleY(1.07);transform-origin:0 12px;">04/11/2022</div>
<div class="r" style="left:1766px;top:557px;width:39px;height:23px;background:#fff;box-sizing:border-box;border:1px solid #444;border-radius:4px;"></div>
<svg class="r" style="left:1771px;top:563px;" width="10" height="11" viewBox="0 0 10 11"><path d="M1 10 L1.6 7 L7.2 1.4 L9.6 3.8 L4 9.4 Z" fill="#444"/><path d="M2.2 7.6 L4.4 9.8" stroke="#fff" stroke-width="0.5"/></svg>
<div class="t" style="left:1781.6px;top:563px;font-size:10.6px;color:#444;font-weight:normal;font-style:normal;-webkit-text-stroke:0.15px #444;transform:scaleX(0.928);transform-origin:0 0;">Edit</div>
<div class="r" style="left:1809px;top:557px;width:50px;height:23px;background:#fff;box-sizing:border-box;border:1px solid #444;border-radius:4px;"></div>
<svg class="r" style="left:1814px;top:563px;" width="9" height="11" viewBox="0 0 9 11"><path d="M0.5 2.2 H8.5 M3 2 V1 H6 V2" fill="none" stroke="#555" stroke-width="1.2"/><path d="M1.5 3.3 H7.5 L7 10.5 H2 Z" fill="#555"/><path d="M3.5 4.5 V9.3 M5.5 4.5 V9.3" stroke="#fff" stroke-width="0.8"/></svg>
<div class="t" style="left:1823.4px;top:563px;font-size:10.6px;color:#444;font-weight:normal;font-style:normal;-webkit-text-stroke:0.15px #444;transform:scaleX(0.951);transform-origin:0 0;">Delete</div>
<div class="t" style="left:329.1px;top:611px;font-size:11.8px;color:#333;font-weight:normal;font-style:normal;-webkit-text-stroke:0.2px #333;">Showing 1 to 8 of 8 entries</div>
<div class="t" style="left:495.5px;top:609px;font-size:12px;color:#555;font-weight:normal;font-style:normal;-webkit-text-stroke:0.2px #555;">&laquo;</div>
<div class="t" style="left:507.7px;top:610px;font-size:11.9px;color:#555;font-weight:normal;font-style:normal;-webkit-text-stroke:0.2px #555;">First</div>
<div class="t" style="left:559px;top:609px;font-size:12px;color:#555;font-weight:normal;font-style:normal;-webkit-text-stroke:0.2px #555;">&lsaquo;</div>
<div class="t" style="left:571.0px;top:610px;font-size:11.5px;color:#555;font-weight:normal;font-style:normal;-webkit-text-stroke:0.2px #555;">Previous</div>
<div class="r" style="left:631px;top:606px;width:30px;height:17px;background:#c8e6b0;border-radius:4px;"></div>
<div class="t" style="left:642.7px;top:610px;font-size:11.8px;color:#222;font-weight:bold;font-style:normal;-webkit-text-stroke:0.4px #222;">1</div>
<div class="t" style="left:676.2px;top:610px;font-size:11.5px;color:#555;font-weight:normal;font-style:normal;-webkit-text-stroke:0.2px #555;">Next</div>
<div class="t" style="left:706px;top:609px;font-size:12px;color:#555;font-weight:normal;font-style:normal;-webkit-text-stroke:0.2px #555;">&rsaquo;</div>
<div class="t" style="left:739.3px;top:609px;font-size:11.7px;color:#555;font-weight:normal;font-style:normal;-webkit-text-stroke:0.2px #555;">Last</div>
<div class="t" style="left:767.5px;top:609px;font-size:12px;color:#555;font-weight:normal;font-style:normal;-webkit-text-stroke:0.2px #555;">&raquo;</div>
<div class="r" style="left:329px;top:638px;width:1564px;height:1px;background:#aaa;"></div>
</body></html>
